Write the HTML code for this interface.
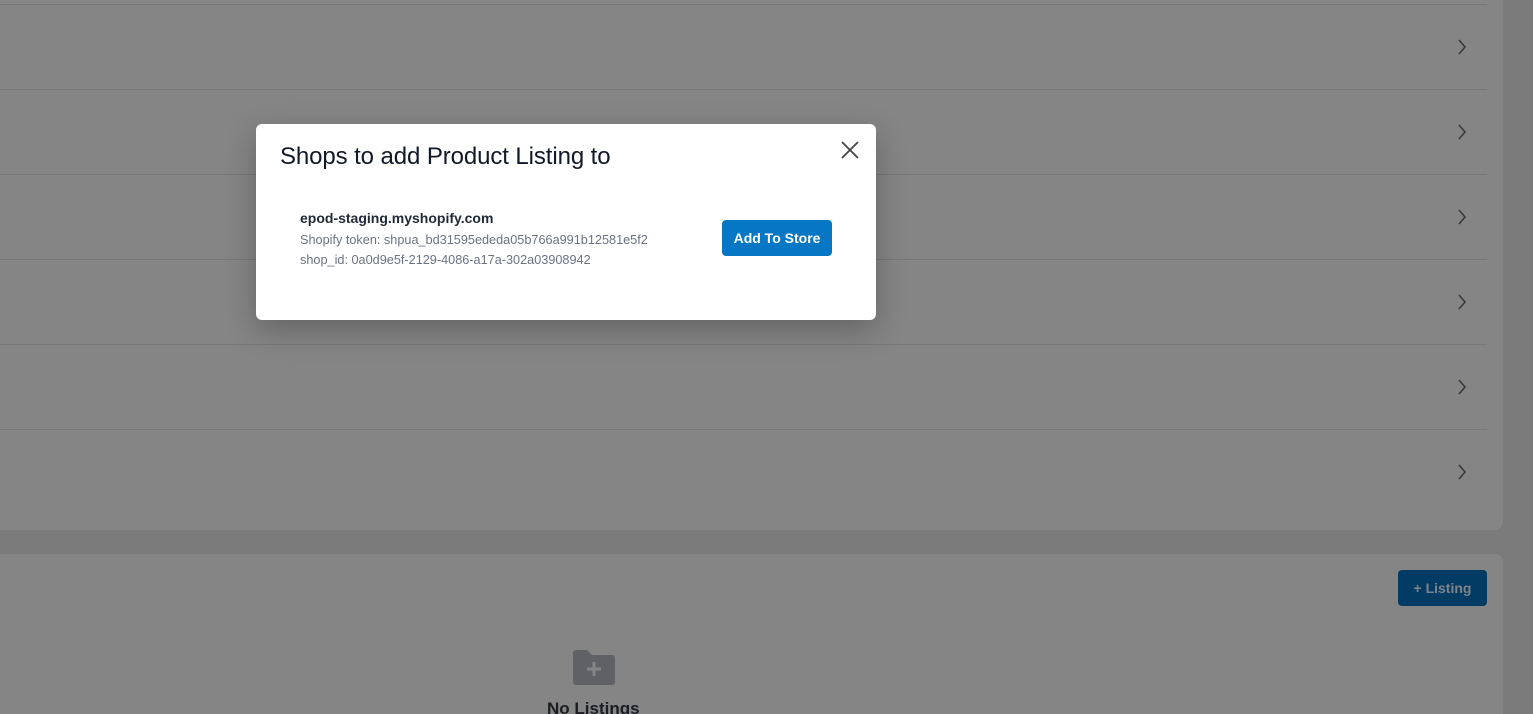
<!DOCTYPE html>
<html style="height:714px;overflow:hidden"><head><style>
body{margin:0;width:1533px;height:714px;background:#7b7b7b;font-family:"Liberation Sans",sans-serif;overflow:hidden;position:relative}
.card{position:absolute;left:-10px;width:1513px;background:#858585;border-radius:8px}
.line{position:absolute;left:0;width:1497px;height:1px;background:#777}
.modal{position:absolute;left:256px;top:124px;width:620px;height:196px;background:#fff;border-radius:6px;box-shadow:0 10px 30px rgba(0,0,0,.25)}
</style></head><body>
<div class="card" style="top:-10px;height:540px">
<div class="line" style="top:14px"></div>
<div class="line" style="top:99px"></div>
<div class="line" style="top:184px"></div>
<div class="line" style="top:269px"></div>
<div class="line" style="top:354px"></div>
<div class="line" style="top:439px"></div>
</div>
<svg style="position:absolute;left:0;top:0" width="1533" height="714">
<g fill="none" stroke="#3a3a3a" stroke-width="1.6">
<path d="M1459 40l6 7-6 7"/><path d="M1459 125l6 7-6 7"/><path d="M1459 210l6 7-6 7"/>
<path d="M1459 295l6 7-6 7"/><path d="M1459 380l6 7-6 7"/><path d="M1459 465l6 7-6 7"/>
</g></svg>
<div class="card" style="top:554px;height:170px"></div>
<div style="position:absolute;left:1398px;top:570px;width:89px;height:36px;background:#023c64;border-radius:4px;color:#7d848c;font-size:14px;font-weight:bold;line-height:36px;text-align:center">+ Listing</div>
<svg style="position:absolute;left:573px;top:649px" width="42" height="36"><path d="M0 4a3 3 0 0 1 3-3h11l5 5h20a3 3 0 0 1 3 3v24a3 3 0 0 1-3 3H3a3 3 0 0 1-3-3z" fill="#606166"/><path d="M21 13v14M14 20h14" stroke="#858585" stroke-width="3"/></svg>
<div style="position:absolute;left:547px;top:699px;font-size:17px;font-weight:bold;color:#1a1d22">No Listings</div>
<div class="modal">
<div style="position:absolute;left:24px;top:19px;font-size:24px;color:#111827;letter-spacing:-0.1px">Shops to add Product Listing to</div>
<svg style="position:absolute;left:585px;top:17px" width="18" height="18"><path d="M1 1l16 16M17 1L1 17" stroke="#444" stroke-width="1.8"/></svg>
<div style="position:absolute;left:44px;top:86px;font-size:14px;font-weight:bold;color:#1f2937">epod-staging.myshopify.com</div>
<div style="position:absolute;left:44px;top:109px;font-size:12.7px;color:#6b7280">Shopify token: shpua_bd31595ededa05b766a991b12581e5f2</div>
<div style="position:absolute;left:44px;top:129px;font-size:12.7px;color:#6b7280">shop_id: 0a0d9e5f-2129-4086-a17a-302a03908942</div>
<div style="position:absolute;left:466px;top:96px;width:110px;height:36px;background:#0677c4;border-radius:4px;color:#fff;font-size:14px;font-weight:bold;line-height:36px;text-align:center">Add To Store</div>
</div>
</body></html>
